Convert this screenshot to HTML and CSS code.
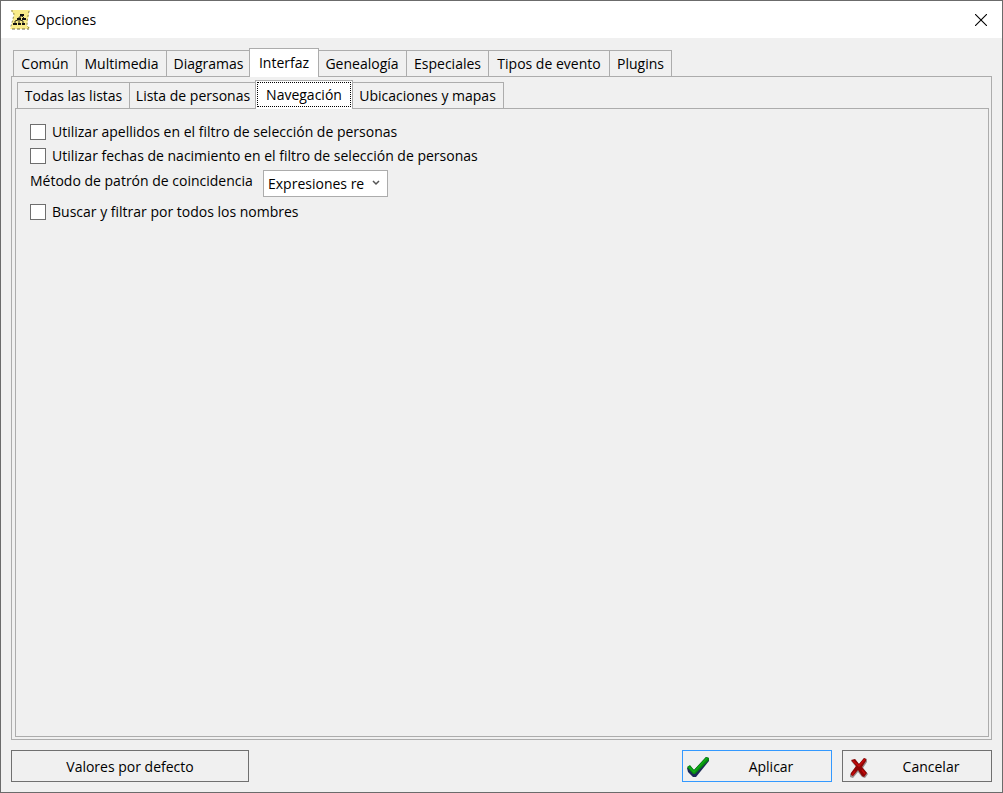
FILE: index.html
```html
<!DOCTYPE html>
<html lang="es">
<head>
<meta charset="utf-8">
<title>Opciones</title>
<link rel="stylesheet" href="styles.css">
</head>
<body>
<main class="window">
  <header class="titlebar">
    <svg class="app-icon" viewBox="0 0 20 20" width="20" height="20" aria-hidden="true">
      <path d="M1 0h19l-1 3-2 13 3 1-1 2H0l1-2 3-12z" fill="#f9ec8a"/>
      <path d="M1 1h2l1 3-1 5-2 7-1 2M19 1l-1 5-1 5 0 5 2 2" stroke="#8d8550" stroke-dasharray="2 2" fill="none"/>
      <path d="M2 19h17" stroke="#6f693f" stroke-dasharray="3 2"/>
      <path d="M10 4h4v2h-4zM7 8h4v2H7zM12 8h4v2h-4zM3 13h4v2H3zM8 13h3v2H8zM12 13h3v2h-3z" fill="#111"/>
      <path d="M11 6v1H9v1M12 6l2 2M8 10l-3 1v2M9 10v3M10 10l3 1v2" stroke="#2e2c1c" fill="none"/>
    </svg>
    <h1 class="title">Opciones</h1>
    <button class="close" type="button" aria-label="Cerrar">
      <svg viewBox="0 0 12 12" width="12" height="12" aria-hidden="true"><path d="M0 0l12 12M12 0L0 12" stroke="#000" stroke-width="1.1"/></svg>
    </button>
  </header>
  <section class="content">
    <div class="tabs tabs-main" role="tablist">
      <button class="tab" type="button" role="tab">Común</button>
      <button class="tab" type="button" role="tab">Multimedia</button>
      <button class="tab" type="button" role="tab">Diagramas</button>
      <button class="tab selected" type="button" role="tab" aria-selected="true">Interfaz</button>
      <button class="tab" type="button" role="tab">Genealogía</button>
      <button class="tab" type="button" role="tab">Especiales</button>
      <button class="tab" type="button" role="tab">Tipos de evento</button>
      <button class="tab" type="button" role="tab">Plugins</button>
    </div>
    <div class="panel panel-outer" role="tabpanel">
      <div class="tabs tabs-sub" role="tablist">
        <button class="tab" type="button" role="tab">Todas las listas</button>
        <button class="tab" type="button" role="tab">Lista de personas</button>
        <button class="tab selected focused" type="button" role="tab" aria-selected="true"><span class="focus-box">Navegación</span></button>
        <button class="tab" type="button" role="tab">Ubicaciones y mapas</button>
      </div>
      <form class="panel panel-inner" role="tabpanel">
        <label class="option"><input class="check" type="checkbox">Utilizar apellidos en el filtro de selección de personas</label>
        <label class="option"><input class="check" type="checkbox">Utilizar fechas de nacimiento en el filtro de selección de personas</label>
        <div class="field">
          <label class="field-label" for="pattern">Método de patrón de coincidencia</label>
          <span class="combo">
            <select class="select" id="pattern"><option>Expresiones re</option></select>
            <svg class="chevron" viewBox="0 0 8 6" width="8" height="6" aria-hidden="true"><path d="M1 1l3 3 3-3" fill="none" stroke="#555" stroke-width="1.5"/></svg>
          </span>
        </div>
        <label class="option"><input class="check" type="checkbox">Buscar y filtrar por todos los nombres</label>
      </form>
    </div>
  </section>
  <footer class="actions">
    <button class="button defaults" type="button">Valores por defecto</button>
    <button class="button primary" type="button">
      <svg viewBox="0 0 24 22" width="24" height="22" aria-hidden="true">
        <path d="M0 12l3-2 4 4L19 1l3 1v3L9 21H6L1 16z" fill="#1b2a55"/>
        <path d="M0 11l3-2 4 5L19 1l3 1v2L8 18H6z" fill="#078a10"/>
        <path d="M2 11l5 5L20 2" fill="none" stroke="#0fae15" stroke-width="1.5"/>
      </svg>
      <span class="caption">Aplicar</span>
    </button>
    <button class="button" type="button">
      <svg viewBox="0 0 24 22" width="24" height="22" aria-hidden="true">
        <path d="M4 5l4-2 4 5 5-6 3 1v3l-4 6 5 6-3 4-3-1-4-5-5 6-3-1v-3l6-7z" fill="#9a8c8c"/>
        <path d="M4 4l4-1 4 5 5-6 2 1v2l-4 6 5 6-3 4-2-1-4-6-5 6-2-1v-2l5-7z" fill="#8f0505"/>
        <path d="M6 5l6 5 6-7M5 19l3-4M15 14l3 4" fill="none" stroke="#c40b0b" stroke-width="1.5"/>
      </svg>
      <span class="caption">Cancelar</span>
    </button>
  </footer>
</main>
</body>
</html>
```
FILE: styles.css
```css
* { box-sizing: border-box; }

body {
  margin: 0;
  font: 14px/20px "Open Sans", "Noto Sans", sans-serif;
  color: #000;
}

button, select { font: inherit; color: inherit; }

.window {
  display: flex;
  flex-direction: column;
  min-height: 100vh;
  border: 1px solid #6b6b6b;
  background: #f0f0f0;
}

.titlebar {
  display: flex;
  align-items: center;
  gap: 5px;
  height: 37px;
  padding: 0 15px 0 9px;
  background: #fff;
}

.title { margin: 0; font-size: 14px; font-weight: 400; }

.close {
  display: flex;
  margin-left: auto;
  padding: 0;
  border: 0;
  background: none;
}

.content {
  display: flex;
  flex: 1;
  flex-direction: column;
  padding: 12px 10px 10px;
}

.tabs {
  display: grid;
  grid-template-rows: 27px;
  margin: 0 0 -1px 2px;
}

.tabs-main { grid-template-columns: 63px 90px 84px 67px 89px 82px 121px 62px; }
.tabs-sub { grid-template-columns: 112px 127px 95px 152px; }

.tab {
  margin-right: -1px;
  padding: 0;
  border: 1px solid #acacac;
  background: #f0f0f0;
  white-space: nowrap;
}

.selected {
  z-index: 1;
  margin: -2px -2px 0 -1px;
  padding-bottom: 1px;
  border-bottom: 0;
  background: #fff;
}

.focused { padding: 1px 1px 2px; }

.focus-box {
  display: block;
  height: 100%;
  border: 1px dotted #000;
  line-height: 24px;
}

.panel {
  display: flex;
  flex: 1;
  flex-direction: column;
  border: 1px solid #acacac;
}

.panel-outer { padding: 5px 2px 2px 3px; }
.panel-inner { align-items: flex-start; padding: 11px 14px; }

.option {
  display: flex;
  align-items: center;
  gap: 6px;
  height: 24px;
}

.check {
  width: 16px;
  height: 16px;
  margin: 0;
  border: 1px solid #6e6e6e;
  background: #fff;
  appearance: none;
}

.field {
  display: flex;
  padding: 2px 0 3px;
}

.field-label {
  min-width: 233px;
  padding-top: 1px;
}

.combo { position: relative; }

.select {
  display: block;
  width: 125px;
  height: 27px;
  padding: 0 20px 0 4px;
  border: 1px solid #acacac;
  border-radius: 0;
  background: #fff;
  appearance: none;
}

.chevron {
  position: absolute;
  top: 10px;
  right: 8px;
  pointer-events: none;
}

.actions {
  display: flex;
  gap: 10px;
  padding: 0 10px 10px;
}

.button {
  display: flex;
  align-items: center;
  gap: 4px;
  width: 150px;
  height: 32px;
  padding: 2px 4px 0;
  border: 1px solid #707070;
  background: #f0f0f0;
}

.primary { border-color: #3399ff; }

.defaults {
  justify-content: center;
  width: 238px;
  margin-right: auto;
}

.caption { flex: 1; text-align: center; }
```
